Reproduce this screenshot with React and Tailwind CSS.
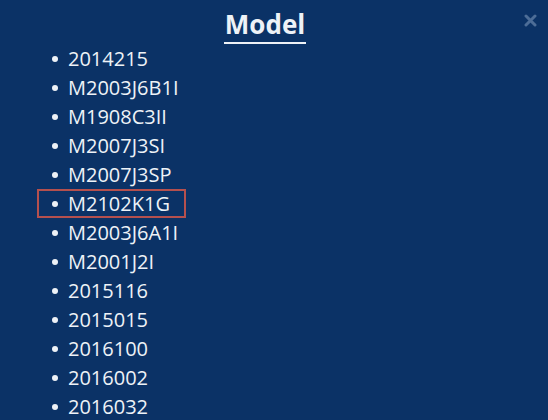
const MODELS = [
  '2014215',
  'M2003J6B1I',
  'M1908C3II',
  'M2007J3SI',
  'M2007J3SP',
  'M2102K1G',
  'M2003J6A1I',
  'M2001J2I',
  '2015116',
  '2015015',
  '2016100',
  '2016002',
  '2016032',
];

const HIGHLIGHT = 'M2102K1G';

function ModelItem({ name }) {
  const active = name === HIGHLIGHT;
  return (
    <li
      className={
        'flex h-[29px] w-fit items-center pl-[13px] pr-[14px] border-2 ' +
        (active ? 'border-[#b5504e]' : 'border-transparent')
      }
    >
      <span className="mr-[10px] h-[6px] w-[6px] shrink-0 rounded-full bg-[#eef2f7]" />
      <span className="leading-none">{name}</span>
    </li>
  );
}

export default function App() {
  return (
    <div
      className="relative h-[420px] w-[548px] overflow-hidden bg-[#0b3266] text-[#eef2f7]"
      style={{ fontFamily: '"Open Sans", "Noto Sans", sans-serif' }}
    >
      <div className="flex justify-center pr-[18px] pt-[8px]">
        <h1 className="border-b-2 border-[#eef2f7] px-[1px] pb-[2px] text-[26px] font-bold leading-[32px]">
          Model
        </h1>
      </div>
      <button className="absolute right-[11px] top-[14px] text-[#4d6d97]">
        <svg width="13" height="13" viewBox="0 0 13 13" fill="none" stroke="currentColor" strokeWidth="3" strokeLinecap="round">
          <path d="M2 2L11 11M11 2L2 11" />
        </svg>
      </button>
      <ul className="pl-[37px] text-[20px]">
        {MODELS.map((m) => (
          <ModelItem key={m} name={m} />
        ))}
      </ul>
    </div>
  );
}
